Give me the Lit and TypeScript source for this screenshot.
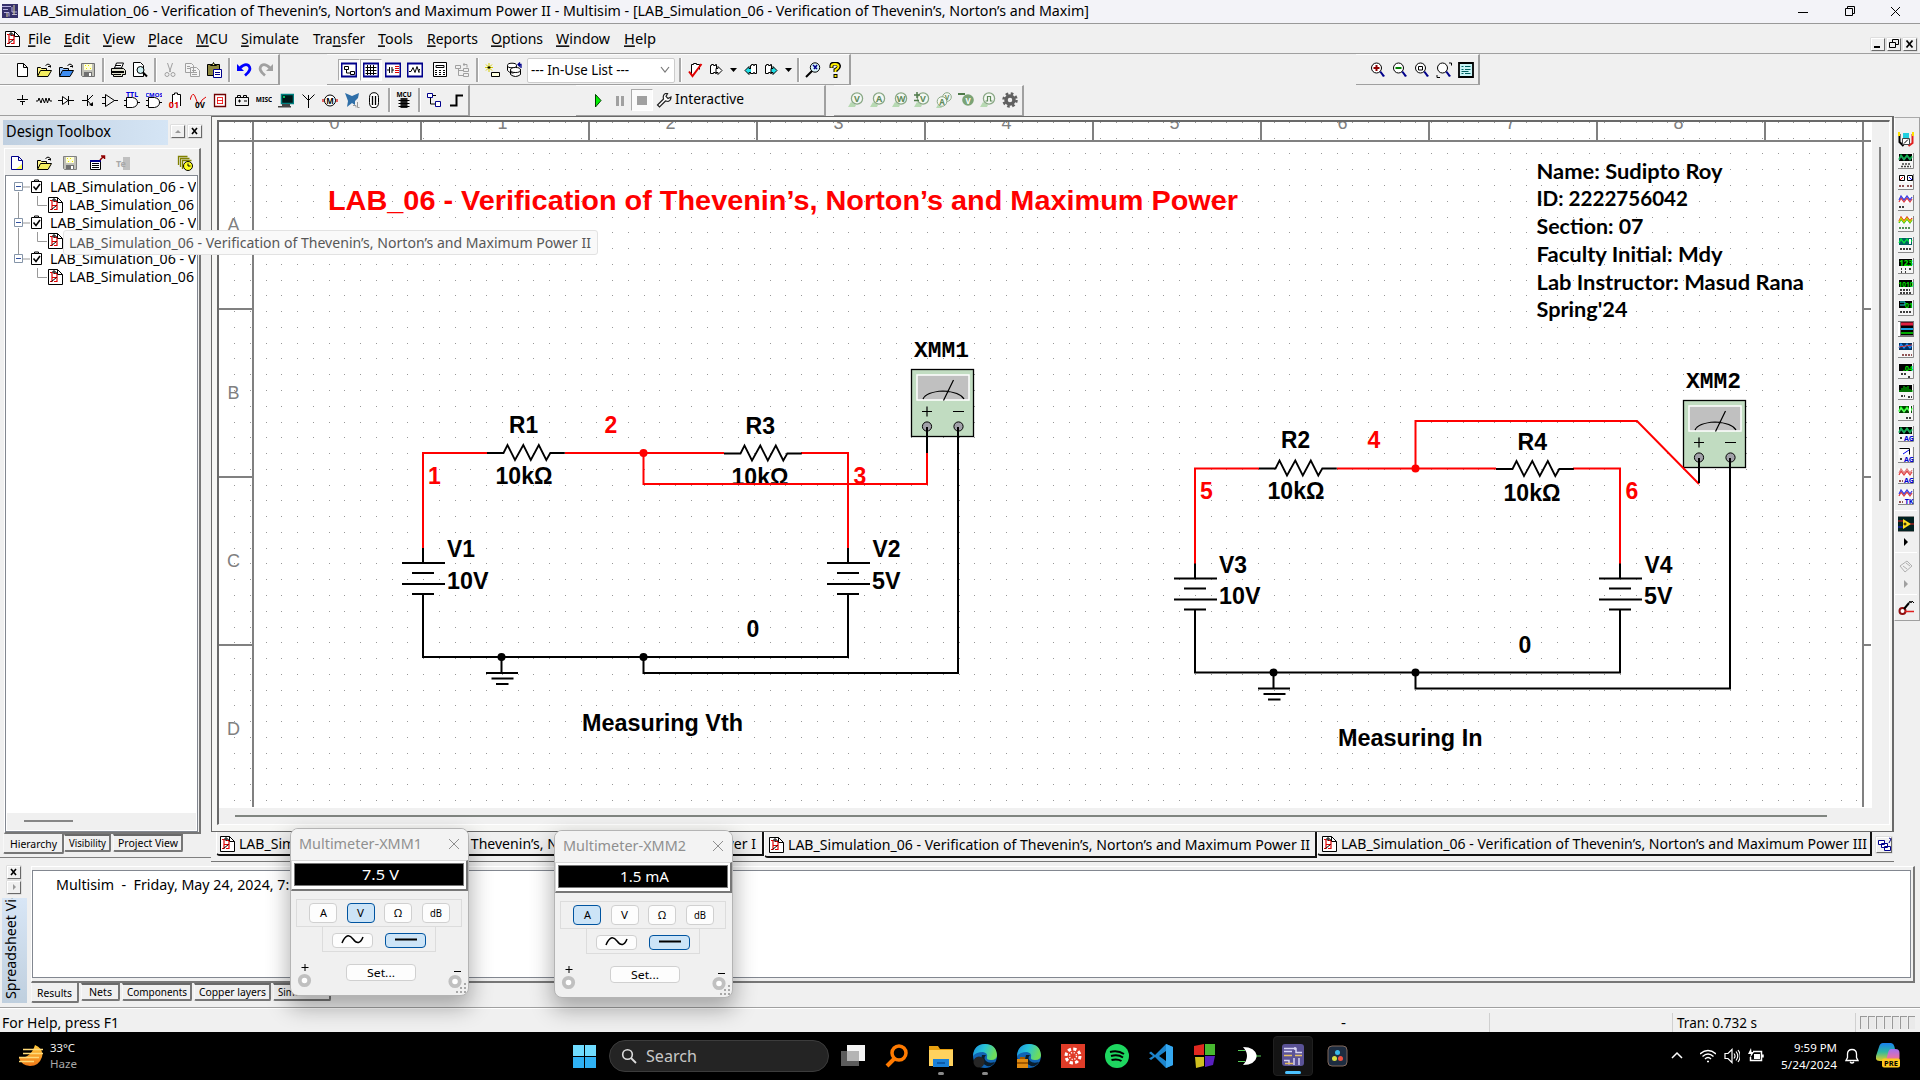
import { LitElement, html, svg, css } from "lit";
import { customElement, property } from "lit/decorators.js";

/** Text line drawn at an exact width; cap height is centred in the box. */
const fit = (t: unknown, w: number, size = 15, cls = "", h = 20) => html`<svg class="fit ${cls}" width=${w} height=${h}>
  <text x="0" y=${h / 2 + size * 0.36} font-size=${size} textLength=${w} lengthAdjust="spacingAndGlyphs">${t}</text></svg>`;

const pic = (body: unknown, w = 16, h = 16, cls = "") => html`<svg class="pic ${cls}" width=${w} height=${h} viewBox="0 0 ${w} ${h}">${body}</svg>`;

const S = (d: string, c = "#000", f = "none", w = 1) => svg`<path d=${d} stroke=${c} fill=${f} stroke-width=${w} />`;
const F = (d: string, f = "#000") => svg`<path d=${d} fill=${f} />`;

const folder = (a: string, b: string) => [
  S("M1.5 14V5.5h3l1 1h5v2", "#000", a), F("M1 14.5L4.5 8.5h11L12 14.5z", b), S("M1.5 14.5L4.5 8.5H15.5L12 14.5z", "#000"),
  S("M9.5 3.5q2.5-3 5 0v2M12 4.5h3", "#000"),
];
const floppy = (g: boolean) => [
  S("M1.5 1.5h13v13h-12l-1-1z", g ? "#808080" : "#707070", "#c0c0b8"), F("M4 2h8v6H4z", "#ffffd8"), F("M4 10h8v4H4z", "#707070"), F("M9 11h2v3H9z", "#fff"),
  S("M5 3l1 1m2-1l1 1m-3 2l1 1m3-1l1 1", "#e8e000"),
];
const sheet = [
  S("M1.5 .5h9l5 5v10h-14z", "#000", "#fff"), S("M10.5 .5v5h5"), S("M3 3.5h2v9H3m2-4h5v-4H7m3 4v4H7", "#e00000", "none", 1.2),
  S("M4.5 12.5l5-4M7 1v4m-2-2h4M8.5 3l3 2.5"),
];
const mag = (inner: unknown) => [svg`<circle cx="6.5" cy="6" r="5" fill="#fff" stroke="#000"/>`, F("M9.5 10l1.5-1 4 5-2 1z", "#00008b"), inner];
const probe = (inner: unknown) => [F("M0 15l3-5 5 3-1 2z", "#b7d9b2"), svg`<circle cx="9" cy="6.5" r="5.6" fill="#f4f8f3" stroke="#8aa886" stroke-width="1.3"/>`, inner];
const letter = (t: string, x = 9, y = 10, f = "#5f8a5a", s = 9) => svg`<text x=${x} y=${y} text-anchor="middle" font-size=${s} font-weight="700" fill=${f}>${t}</text>`;
const chip = (c: string) => [S("M1.5 3.5h1v-1h2v1h2v-1h1v9h-1v-1h-2v1h-3z", "#000", "#fff"), F("M7 6h2V4.500l4 4-4 4V11H7z", c), S("M7 6.500h2v-2l4 4-4 4v-2H7z")];

const I: Record<string, unknown> = {
  blank: S("M3.5 1.5h6l4 4v9h-10zM9.5 1.5v4h4", "#000", "#fff"),
  blankBlue: [S("M2.5 1.5h7l4 4v9h-11zM9.5 1.5v4h4", "#00008b", "#fff"), F("M7 14l6-5v5z", "#ffff60")],
  open: folder("#fff68a", "#f4ee60"), openBlue: folder("#9dc8ff", "#3d8cf0"), save: floppy(false), saveG: floppy(true),
  print: [S("M4.5 6l2-5h7l-2 5z", "#000", "#fff"), S("M1.5 6.5h12l2 2v4h-3v2h-9v-2h-2z", "#000", "#e2e2d0"), F("M2 9h12v2H2z"), S("M6 3.5h5M4 12.5h7")],
  preview: [S("M1.5 .5h7l3 3v11h-10z", "#000", "#fff"), svg`<circle cx="8.500" cy="8" r="3.500" fill="#cdeff2" stroke="#000"/>`, S("M11 10.500l4 4", "#000", "none", 2)],
  cut: [S("M5.500 1l3 9M10.500 1l-3 9", "#a0a0a0"), svg`<circle cx="5" cy="12.500" r="2" fill="none" stroke="#a0a0a0"/><circle cx="11" cy="12.500" r="2" fill="none" stroke="#a0a0a0"/>`],
  copy: S("M1.500 1.500h6l2 2v7h-8zM6.500 5.500h6l3 3v6h-9zM3 4.500h3m-3 2h3m2 2h4m-4 2h5m-5 2h5", "#a0a0a0", "#f4f4f4"),
  paste: [S("M1.500 2.500h12v11h-12z", "#000", "#8c8640"), S("M4.500 3.500v-1h2l1-2 1 2h2v1z", "#000", "#ffff80"), S("M7.500 7.500h8v8h-8zM9 10.500h5m-5 2h5", "#00008b", "#fff")],
  undo: [F("M1 2l0 7h7z", "#0000ff"), S("M4 6q5-5 8.500-2.500 4 4-3.500 10", "#0000ff", "none", 2.800)],
  redo: [F("M15 2v7H8z", "#a0a0a0"), S("M12 6q-5-5-8.500-2.500-4 4 3.500 10", "#a0a0a0", "none", 2.800)],
  boxes: [S("M.5 1.500h15v13H.5z", "#00008b", "#fff", 2), S("M3.500 4.500h4v3h-4zM9.500 9.500h4v3h-4zM5.500 8v3h4", "#000", "#fff")],
  grid: [S("M.5 1.500h15v13H.5z", "#00008b", "#fff", 2), S("M4.500 3v10M7.500 3v10M10.500 3v10M2.500 5.500h11M2.500 8.500h11M2.500 11.500h11")],
  cap: [S("M.5 1.500h15v13H.5z", "#00008b", "#fff", 2), S("M2 8h2.500M7 8h2M4.500 5v6M7 5v6"), S("M10 4.500h4m-4 2h4m-4 2h4m-4 2h4", "#e00000")],
  scope: [S("M.5 1.500h15v13H.5z", "#00008b", "#fff", 2), S("M2 9.500h2l2-4 2 5 2-6 2 6v-3h1")],
  calc: [S("M1.500 .5h13v14h-13z", "#000", "#fff"), S("M4 3.500h8v2H4z"), S("M3 8.500h2m2 0h2m2 0h2M3 10.500h2m2 0h2m2 0h2M3 12.500h2m2 0h2m2 0h2", "#000", "none", 1.200)],
  hier: S("M1.500 3.500h5v3h-5zM9.500 6.500h5v3h-5zM9.500 11.500h5v3h-5zM4.500 7v6.500h5M4.500 8.500h5M9 2.500h4v3M10 1v3", "#a0a0a0"),
  newpart: [S("M5 1v9M1 5.500h8M2 2.500l6 6M8 2.500l-6 6", "#d8d000"), S("M5 4v3M3.500 5.500h3"), S("M7.500 10.500h8v4h-8z", "#000", "#ffffe0")],
  db: [S("M1.500 3.500v5q2 2.500 5 2.500l4-1v-6.500M4.500 8.500v4q5 4 10 0v-5", "#000", "#fff"), svg`<ellipse cx="6" cy="3.500" rx="4.500" ry="2.300" fill="#fff" stroke="#000"/><ellipse cx="9.500" cy="8" rx="5" ry="2.500" fill="#fff" stroke="#000"/>`, S("M15 6V2.500h-3m2-2l-2 2 2 2", "#00008b", "none", 1.300)],
  check: [S("M4.500 13.500v-11h2v-1h3v1h3v5", "#000", "#fff"), S("M2 9.500l3.500 4.500L14.500 2", "#e00000", "none", 2)],
  exportw: chip("#fff"), cyanR: chip("#20e0e8"),
  cyanL: [S("M8.500 3.500h1v-1h2v1h1v-1h2v9h-2v-1h-1v1h-3z", "#000", "#fff"), F("M9 11H7v1.500l-4-4 4-4V6h2z", "#20e0e8"), S("M9 6.500H7v-2l-4 4 4 4v-2h2")],
  find: [svg`<circle cx="10" cy="5.500" r="4.700" fill="#d6f4fa" stroke="#000"/>`, S("M7 9l-6 6", "#000", "none", 2), S("M8 3l4 4m0-4l-3 4", "#00008b", "none", 1.500)],
  help: [S("M4.500 6V3.500q0-2 3.500-2t4 2.500q0 2-3.500 4v2", "#000", "none", 4), S("M4.500 5.500V4q0-2 3.500-2t3.500 2.500q0 1.500-3 3.500v2", "#ffee00", "none", 2), F("M6.500 12h4v4h-4z"), F("M7.500 13h2v2h-2z", "#ffee00")],
  zin: mag(F("M3.500 5h2V3h2v2h2v2h-2v2h-2V7h-2z", "#900000")), zout: mag(F("M3.500 5h6v2h-6z", "#008000")),
  zarea: mag(S("M4.500 4.500h4v3.500h-4z")), zfit: mag(S("M13 1h2.500v2.500M1 13v2.500h3")),
  zpage: [S("M1 1h14v14H1z", "#000", "#c8f4f6", 1.800), S("M3.500 4.500h2M3.500 7.500h2M3.500 11.500h2M7 4.500h5.500M7 7.500h5.500M3.500 9.500h7M7 11.500h5.500", "#006060")],
  src: S("M3 7.500h11M6 9.500h5M8.500 3v4M8.500 10v3", "#000"),
  res: S("M-1 9h3l1-3 2 5 1.500-5 2 5 1.500-5 1.500 5 1.500-5 1 3h3", "#000"),
  diode: [S("M-1 8.500h18M10.500 4v9"), S("M4.500 4.500v8l5.500-4z", "#000", "#fff")],
  bjt: [S("M2 8.500h5M7.500 3v11M8 8l5-5M8 9l4 5"), F("M13 14v-4l-4 3z")],
  opamp: S("M3.500 2.500v12l9-6zM0 5.500h3.500M0 11.500h3.500M12 8.500h4"),
  ttl: [S("M2.500 5.500h6q5 1 5 5t-5 5h-6zM0 8.500h3M0 13.500h3M13 10.500h4", "#000", "#fff"), letter("TTL", 8, 5, "#0000e0", 7)],
  cmos: [S("M2.500 5.500h6q5 1 5 5t-5 5h-6zM0 8.500h3M0 13.500h3M13 10.500h4", "#000", "#fff"), letter("CMOS", 8, 5, "#0000e0", 6)],
  dig: [S("M4.500 12V2.500h2V1h3v1.500h3V14", "#000", "#fff"), letter("01", 6, 15.500, "#e00000", 9)],
  mix: [S("M0 8q3-11 6-1t6 1l4-3", "#e00000"), letter("0V", 10, 15.500, "#000", 8)],
  ind: [S("M2.500 2.500h11v12h-11z", "#700000", "#fff", 1.300), S("M5 5.500h6M5 8.500h6M5 11.500h6M5.500 6v6M10.500 6v6", "#f00000", "none", .8)],
  pwr: S("M1.500 5.500h13v8h-13zM3.500 5V3.500h3V5M9.500 5V3.500h3V5M4 9h3M5.500 7.500v3M10 9h3"),
  misc: letter("MISC", 8, 10, "#000", 6.500),
  term: [S("M3.500 2.500h12v9h-12z", "#008080", "#001818", 1.500), F("M0 14h13v1.500H0zM4 12h8v2H4z", "#444"), F("M5 4h2v2H5z", "#00c060")],
  ant: S("M8.500 3v13M2.500 2.500l6 6 6-6"),
  mot: [S("M0 8.500h16"), svg`<circle cx="8" cy="8.500" r="5.500" fill="#fff" stroke="#000"/>`, letter("M", 8, 11.500, "#000", 8), F("M0 7h2v3H0zM14 7h2v3h-2z", "#e06060")],
  bird: [F("M1 1l7 3 7-3-1 5-3 3v4l-3-2-5 4 1-6z", "#2f6fa8"), S("M9 13.500h3v2M13.500 10v5.500h2", "#999")],
  conn: [S("M8 .7q4.500 0 4.500 5v5q0 5-4.500 5t-4.500-5v-5q0-5 4.500-5z", "#000", "#fff"), S("M6.500 4v9M9.500 4v9", "#000", "none", 1.300)],
  mcu: [letter("MCU", 8, 5, "#000", 6.500), F("M4.500 6h7v10h-7z", "#222"), S("M2.500 8.500h11M2.500 11.500h11M2.500 14.500h11")],
  hb: [S("M1.500 1.500h5v4h-5zM9.500 9.500h5v5h-5z", "#00008b", "#fff"), S("M4.500 6v6H9M7 3.500h3")],
  bus: S("M2 13.500h6.500V3.500H15", "#000", "none", 2),
  pV: probe(letter("V")), pA: probe(letter("A")), pW: probe(letter("W")),
  pDV: [probe(letter("V")), S("M0 3h6M3 0v6M0 8.500h5", "#4f7a4a", "none", 1.500)],
  pAV: [F("M0 16l3-5 3 5z", "#b7d9b2"), svg`<circle cx="11" cy="5" r="4.300" fill="#f4f8f3" stroke="#8aa886"/><circle cx="6" cy="9.500" r="4.800" fill="#f4f8f3" stroke="#8aa886"/>`, letter("V", 11, 8, "#5f8a5a", 7), letter("A", 6, 12.500, "#5f8a5a", 8)],
  pRef: [S("M0 2h7", "#4f7a4a", "none", 2), svg`<circle cx="10" cy="8" r="5.800" fill="#7ba375"/>`, letter("V", 10, 11.500, "#fff", 8)],
  pDig: probe(S("M5.500 9h2V4.500h3V9h2", "#5f8a5a", "none", 1.200)),
  gear: [svg`<circle cx="8" cy="8" r="4" fill="none" stroke="#606060" stroke-width="3.500"/><circle cx="8" cy="8" r="6.500" fill="none" stroke="#606060" stroke-width="2.500" stroke-dasharray="2.600 2.500"/>`],
  play: [F("M5 2l6 6.500L5 15z", "#00f000"), S("M5.500 2.500l5.500 6-5.500 6.500z", "#004000")],
  pause: F("M4 4h3v10H4zM9 4h3v10H9z", "#a0a0a0"), stop: F("M3 4h10v9H3z", "#a0a0a0"),
  wrench: S("M1.500 13l6-6q-1-4 2-5.500h2l-1.500 3 2 2 3-1.500q0 3.500-3 4.500l-2.500-.5-6 6z", "#222", "#fff", 1.200),
  detach: [S("M1.500 5.500h10v9h-10zM3 8.500h7m-7 2h7m-7 2h7", "#000", "#fff"), F("M1 5h11v2H1z", "#00008b"), S("M11 5l4-4m-3 0h3.500v3", "#900000", "none", 1.500)],
  rename: [F("M8 2h7v13H8z", "#c0c0c0"), letter("Te", 6, 12, "#a8a8a8", 9)],
  recent: [S("M1.500 10V1.500h9M3.500 12V3.500h9M5.500 14V5.500h9", "#808000", "none", 1.300), svg`<circle cx="11" cy="11" r="4.500" fill="#ffff20" stroke="#000"/>`, S("M11 8.500V11h2.500")],
  clip: [S("M1.500 2.500h10v11h-10z", "#000", "#fff"), S("M4.500 2.500V1h4v1.500z", "#000", "#fff"), S("M3.500 7.500l2.500 3 4-5.500", "#000", "none", 1.600)],
  min: S("M3 9.500h10"), rest: S("M4.500 5.500h7v7h-7zM6.500 5.500v-2h7v7h-2"), close: S("M4 4l9 9M13 4l-9 9"),
  cascade: S("M1.500 3.500h6v4h-6zM4.500 6.500h6v4h-6zM7.500 9.500h6v4h-6zM12 1l2 1-2 4", "#00008b", "#fff"),
};

/** Miniature instrument: a screen on top of a white panel with terminals. */
const inst = (screen: string, trace: unknown, tag = "", dots = "M2 13h2m2 0h2m2 0h2", dc = "#000") => pic([
  F("M0 0h16v16H0z", "#f6f6f6"), S("M15.500 0v15.500H0", "#888"), F("M1 1h13v7H1z", screen), trace,
  svg`<path d=${dots} stroke=${dc} stroke-width="1.400" stroke-dasharray="2 1" fill="none"/>`, tag ? letter(tag, 11, 15, "#0000d0", 7) : "",
], 16, 16);
const zig = (c: string, y = 4) => S(`M1 ${y + 2}l2-4 3 4 3-4 3 4 2-3`, c, "none", 1.300);
const instruments = [
  pic([S("M1.500 2v8l4 4", "#000", "none", 2), S("M14.500 2v9l-4 3", "#e02020", "none", 2), F("M0 0h2v4H0zM14 0h2v4h-2z", "#ffe000"), F("M5 1h6v5H5z", "#20d0e0"), S("M4.500 6.500h7v6h-7z", "#444", "#fff"), S("M6 11.500l4-4")]),
  inst("#000", [zig("#00c040"), zig("#20a060", 5)], "", "M4 11h8M3 13.500h10", "#444"),
  inst("#fff", [S("M1.500 1.500h5v5h-5zM9.500 1.500h5v5h-5z"), S("M2 6l3-3", "#f00000"), S("M11 3l3 3", "#0000f0")], "", "M1 12h6m2 0h6", "#702020"),
  inst("#fff", [zig("#e04040", 5), zig("#4040e0", 3)], "", "M1 12h6"),
  inst("#fff", [zig("#20c020", 5), zig("#e02020", 3), zig("#d0d000", 4)], "", "M1 12h11", "#207020"),
  inst("#006060", [zig("#00e040"), S("M12 2v5", "#fff", "none", 2)], "", "M2 12h11"),
  inst("#000", letter("123", 8, 7.500, "#00e000", 8), "", "M3 11h1m3 0h1m3 0h2M3 14h1m3 0h1"),
  inst("#000", letter("1010", 8, 7.500, "#00e000", 6.500), "", "M2 11h10M2 14h12"),
  inst("#000", [S("M2 2h5v3H2", "#20e0e8"), letter("01", 11, 8, "#00e000", 7)], "", "M2 12h12"),
  pic([F("M0 0h16v16H0z", "#777"), F("M3 1h12v13H3z", "#000"), S("M3 3h12", "#e02040", "none", 3), S("M3 8h12", "#20a0e0", "none", 2), S("M3 12h12", "#00e000", "none", 1.500), S("M1 1v14", "#fff", "none", 2)]),
  inst("#003060", [zig("#2090ff"), S("M1 5l13-2", "#e04040")], "", "M4 13h10", "#702020"),
  inst("#000", letter(".04", 10, 8, "#00e000", 7), "", "M3 11h6M10 14h3"),
  inst("#000", S("M2 8V6m2 2V4m2 4V2m2 6V3m2 5V2m2 6V5m2 3V6", "#00e000"), "", "M3 12h4m3 1h4"),
  inst("#004000", [zig("#00f000"), zig("#60ff60", 5), S("M12 1v7", "#fff", "none", 2)], "", "M8 13h6"),
  inst("#000", [zig("#00c040"), zig("#20a060", 5)], "AG", "M2 12h3"),
  inst("#fff", [S("M1.500 1.500h10v6"), S("M5 7l6-4", "#0000f0")], "AG", "M2 12h2"),
  inst("#fff", [zig("#e04040", 5), zig("#e08080", 3)], "AG", "M1 13h4", "#702020"),
  inst("#fff", [zig("#e04040", 5), zig("#4040e0", 3)], "TK", "M1 13h4", "#702020"),
];
const dropR = (c: string) => pic(F("M5 1l4 4-4 4z", c), 14, 10);

const dots = (() => {
  let d = "";
  for (let j = 0; j < 44; j++) for (let i = 0; i < 104; i++) {
    d += `M${Math.floor(234.6 + 15.75 * i)} ${Math.floor(122.4 + 15.77 * j)}h1v1h-1z`;
  }
  return d;
})();

const edge = (extra: unknown = "") => pic([
  svg`<defs><linearGradient id="eg" x1="0" y1="0" x2="1" y2=".3"><stop offset="0" stop-color="#1a8fe0"/><stop offset=".5" stop-color="#28c4d8"/><stop offset="1" stop-color="#6fdc5a"/></linearGradient></defs>
  <circle cx="12" cy="12" r="12" fill="#1164b4"/>`,
  svg`<path d="M0 12Q1 0 12 0t12 11q0 5-6 5-5 0-4-3 1-4-4-5Q3 8 0 12z" fill="url(#eg)"/>`,
  F("M9 11q-3 8 5 11 5 1 8-4-6 2-9-1-3-3 0-6z", "#0a1d2c"), extra,
], 24, 24);

@customElement("multi-meter")
export class MultiMeter extends LitElement {
  @property() name = "";
  @property() reading = "";
  @property() mode = "";
  @property({ type: Number }) readingWidth = 36;

  static styles = css`
    :host { display: block; font-family: "Noto Sans", "Open Sans", sans-serif; }
    .win { box-sizing: border-box; width: 179px; height: 168px; border: 1px solid #b4b4b4; border-radius: 8px; background: #f0f0f0; box-shadow: 0 10px 22px 2px rgba(0,0,0,.3); overflow: hidden; }
    svg { display: block; overflow: visible; flex: none; }
    .bar { box-sizing: border-box; height: 31px; display: flex; align-items: center; justify-content: space-between; padding: 0 8px 1px 8px; background: #f3f3f3; fill: #8f8f8f; }
    .screen { box-sizing: border-box; height: 31px; border: 1px solid #d8d8d8; border-right: 2px solid #777; border-bottom: 2px solid #777; background: #fff; padding: 2px 2px 3px 2px; }
    .lcd { box-sizing: border-box; height: 23px; border: 1px solid #777; background: #000; fill: #fff; display: flex; justify-content: center; align-items: center; padding-left: 2px; }
    .modes { margin: 8px 0 0 5px; border: 1px solid #dcdcdc; display: flex; align-items: center; padding-left: 12px; gap: 9.6px; box-sizing: border-box; width: 166px; height: 28px; }
    .b { box-sizing: border-box; width: 28px; height: 20px; border: 1px solid #d0d0d0; border-radius: 4px; background: #fdfdfd; display: flex; align-items: center; justify-content: center; fill: #000; font-size: 11px; }
    .on { background: #cce4f7; border: 1px solid #0054a0; }
    .wave { box-sizing: border-box; width: 114px; height: 25px; margin-left: 31px; border: 1px solid #dcdcdc; border-top: 0; display: flex; align-items: center; justify-content: space-between; padding: 2px 9px 0; }
    .wave .b { width: 41px; height: 15px; }
    .foot { display: flex; justify-content: space-between; padding: 11px 0 0 7px; height: 30px; }
    .set { width: 70px; height: 17px; margin-top: 1px; margin-left: 20px; }
  `;

  render() {
    const ring = (x: number, y: number) => svg`<circle cx=${x} cy=${y} r="4.700" fill="#fff" stroke="#c0c0c0" stroke-width="3.800"/>`;
    const widths: Record<string, number> = { A: 7, V: 7, "Ω": 8, dB: 12 };
    return html`<div class="win">
      <div class="bar">${fit(`Multimeter-${this.name}`, 123, 15)}${pic(S("M1 1l10 10M11 1L1 11", "#8f8f8f"), 12, 12)}</div>
      <div class="screen"><div class="lcd">${fit(this.reading, this.readingWidth, 15)}</div></div>
      <div class="modes">${Object.keys(widths).map((m) => html`<div class="b ${m === this.mode ? "on" : ""}">${fit(m, widths[m], 11, "", 16)}</div>`)}</div>
      <div class="wave">
        <div class="b">${pic(S("M1 8q5-12 11-4t10-2", "#000", "none", 1.500), 23, 10)}</div>
        <div class="b on">${pic(S("M0 4.500h22", "#000", "none", 2), 22, 10)}</div>
      </div>
      <div class="foot">
        <svg width="14" height="28">${S("M3.500 4.500h7M7 1v7")}${ring(6.500, 17.500)}</svg>
        <div class="b set">${fit("Set...", 28, 11.500, "", 16)}</div>
        <svg width="38" height="32">${S("M24 8.500h7")}${ring(25, 18.500)}${F("M34 20h2v2h-2zM30 24h2v2h-2zM34 24h2v2h-2zM26 28h2v2h-2zM30 28h2v2h-2zM34 28h2v2h-2z", "#a8a8a8")}</svg>
      </div></div>`;
  }
}

@customElement("app-root")
export class AppRoot extends LitElement {
  static styles = css`
    :host { display: block; width: 1920px; height: 1080px; overflow: hidden; font-family: "Noto Sans", "Open Sans", sans-serif; background: #f0f0f0; color: #000; }
    svg { display: block; flex: none; }
    .fit { overflow: visible; }
    .up { margin-top: -3px; }
    .app { position: relative; width: 1920px; height: 1080px; display: flex; flex-direction: column; overflow: hidden; }
    .app * { box-sizing: border-box; }
    .title, .menu, .bars, .bar, .tabs, .status, .task { display: flex; }
    .title { height: 24px; background: #f3f3f8; border-bottom: 1px solid #999; align-items: center; padding: 0 17px 0 2px; }
    .sp { flex: 1; }
    .title .wins { display: flex; gap: 30px; padding-bottom: 1px; }
    .menu { height: 30px; border-bottom: 1px solid #a0a0a0; align-items: center; padding: 1px 3px 0 4px; }
    .u { text-decoration: underline; }
    .mdi { display: flex; gap: 2px; padding-top: 11px; }
    .btn3 { width: 14px; height: 13px; background: #f0f0f0; border: 1px solid #fff; border-right-color: #696969; border-bottom-color: #696969; display: flex; align-items: center; justify-content: center; box-shadow: 0 0 0 .5px #ccc; }
    .bars { height: 31px; }
    .bar { height: 31px; align-items: center; border: 1px solid #fdfdfd; border-right-color: #a0a0a0; border-bottom-color: #a0a0a0; border-width: 1px 2px 1px 0; padding-left: 11px; }
    .bars.top .bar { padding-top: 2px; }
    .c { width: 22px; height: 22px; display: flex; align-items: center; justify-content: center; flex: none; }
    .c.on { background: #fbfbfb; border: 1px solid #aaa; border-right-color: #fff; border-bottom-color: #fff; }
    .s { width: 8px; flex: none; height: 24px; display: flex; justify-content: center; }
    .s::before { content: ""; width: 2px; background: #a8a8a8; border-right: 1px solid #fff; }
    .gap { width: 3px; flex: none; }
    .dd { width: 11px; display: flex; justify-content: center; flex: none; }
    .combo { width: 148px; height: 25px; background: #fff; border: 1px solid #ccc; display: flex; align-items: center; justify-content: space-between; padding: 0 4px 0 3px; margin: 0 1px 0 2px; flex: none; border-radius: 2px; }
    .main { display: flex; height: 746px; }
    .dock { width: 211px; display: flex; flex-direction: column; height: 742px; padding-left: 3px; border-bottom: 1px solid #808080; }
    .dhead { display: flex; height: 32px; padding-top: 4px; }
    .dtitle { width: 165px; height: 25px; background: linear-gradient(90deg, #bfcfe0, #d5e5f5); padding: 0 0 3px 3px; display: flex; align-items: center; margin-right: 3px; }
    .dbtns { display: flex; gap: 3px; padding-top: 5px; }
    .dbody { margin-left: 1px; width: 197px; height: 686px; border: 1px solid #fff; border-right: 2px solid #777; border-bottom: 2px solid #777; display: flex; flex-direction: column; }
    .dtools { display: flex; height: 26px; align-items: center; padding: 3px 5px 0 4px; gap: 9.500px; }
    .tree { flex: 1; background: #fff; border: 1px solid #828790; display: flex; flex-direction: column; padding-top: 2px; overflow: hidden; margin-right: 1px; }
    .tr { height: 18px; display: flex; align-items: center; overflow: hidden; width: 190px; flex: none; }
    .tgap { width: 6px; flex: none; }
    .hs { height: 17px; margin: auto 1px 1px 1px; background: #f0f0f0; padding: 7px 0 0 17px; flex: none; }
    .thumb { height: 2px; width: 49px; background: #868686; }
    .tabs { align-items: flex-start; }
    .tab { height: 18px; border: 1px solid #696969; border-top-width: 2px; border-left-color: #f8f8f8; border-right: 2px solid #777; border-bottom: 2px solid #777; display: flex; align-items: center; justify-content: center; border-radius: 0 0 2px 2px; margin-right: 2px; }
    .tab.act { height: 20px; border-top: 0; padding-top: 3px; }
    .view { width: 1683px; height: 746px; display: flex; flex-direction: column; }
    .vbox { height: 716px; border: 1px solid #696969; padding: 3px 3px 0 5px; background: #f6f6f4; border-right-width: 2px; }
    .frame { width: 1673px; height: 705px; border: 2px solid #696969; border-right: 1px solid #fff; border-bottom: 1px solid #fff; display: grid; grid-template-columns: 1653px 17px; grid-template-rows: 686px 16px; background: #f0f0f0; }
    .vs { padding: 25px 0 0 7px; }
    .vthumb { width: 2px; height: 354px; background: #868686; }
    .hsb { padding: 7px 0 0 16px; }
    .hthumb { height: 2px; width: 1592px; background: #808580; }
    .docs { display: flex; height: 30px; padding-left: 5px; align-items: flex-start; border-bottom: 1px solid #777; }
    .doc { height: 24px; display: flex; align-items: center; padding: 2px 0 0 3px; gap: 4px; border-right: 2px solid #111; border-bottom: 2px solid #111; border-left: 1px solid #fff; border-radius: 0 0 0 4px; flex: none; }
    .doc:first-child { padding-left: 2px; }
    .doc.act { height: 26px; }
    .inst { width: 26px; height: 504px; margin-top: 1px; border-left: 1px solid #fff; border-right: 1px solid #a0a0a0; border-bottom: 1px solid #a0a0a0; border-top: 1px solid #aaa; padding: 14px 2px 0 0; display: flex; flex-direction: column; gap: 5px; align-items: center; flex: none; }
    .hr { width: 22px; height: 1px; background: #a0a0a0; border-bottom: 1px solid #fff; flex: none; }
    .spread { height: 147px; display: flex; padding-top: 4px; border-bottom: 1px solid #a0a0a0; }
    .side { width: 31px; padding-left: 2px; display: flex; flex-direction: column; }
    .side .btn3 { margin: 0 0 2px 5px; }
    .vert { height: 105px; width: 25px; background: linear-gradient(180deg, #d8e6f6, #bfcfde); margin-top: 2px; overflow: hidden; }
    .vert svg { overflow: hidden; }
    .sheetcol { display: flex; flex-direction: column; width: 1884px; }
    .log { height: 117px; border: 1px solid #fff; border-right: 2px solid #777; border-bottom: 2px solid #777; padding: 3px 2px 3px 0; flex: none; }
    .logbox { height: 108px; background: #fff; border: 1px solid #828790; padding: 4px 0 0 23px; }
    .status { height: 24px; align-items: center; padding: 4px 4px 0 2px; border-top: 1px solid #fff; }
    .cell { height: 20px; border-left: 1px solid #d0d0d0; display: flex; align-items: center; }
    .segs { display: flex; gap: 1px; padding-left: 4px; }
    .seg { width: 7px; height: 13px; background: #eaeaea; border-left: 1px solid #999; border-top: 1px solid #999; }
    .task { height: 48px; background: #000; align-items: center; fill: #fff; }
    .stack { display: flex; flex-direction: column; }
    .dim { fill: #a8a8a8; }
    .hi { fill: #f0f0f0; }
    .search { width: 220px; height: 32px; border-radius: 16px; background: #242424; border: 1px solid #3c3c3c; display: flex; align-items: center; padding-left: 11px; gap: 9px; margin: 0 2px 0 13px; fill: #c8c8c8; }
    .app44 { width: 44px; height: 48px; display: flex; flex-direction: column; align-items: center; padding-top: 12px; gap: 4px; flex: none; }
    .app44.act { width: 40px; margin: 0 2px; height: 40px; padding-top: 7px; background: #141414; border-radius: 4px; border: 1px solid #202020; gap: 5px; }
    .ind { width: 6px; height: 3px; border-radius: 2px; background: #8a8a8a; }
    .ind.wide { width: 16px; background: #4cc2ff; }
    .tip { position: absolute; left: 63px; top: 230px; width: 535px; height: 25px; background: #f9f9f9; border: 1px solid #e2e2e2; border-radius: 3px; padding: 1px 0 0 5px; fill: #575757; }
    .m1 { position: absolute; left: 290px; top: 828px; }
    .m2 { position: absolute; left: 554px; top: 830px; }
    .lb { font-family: "Liberation Sans", Arial, sans-serif; font-weight: 700; font-size: 23px; }
    .big { font-size: 28px; }
    .red { fill: #f00; }
    .rul { font-family: "Liberation Sans", Arial, sans-serif; font-size: 18px; fill: #808080; }
    .mono { font-family: "Liberation Mono", monospace; font-weight: 700; font-size: 22px; }
    .info { font-family: Lato, "Open Sans", sans-serif; font-weight: 700; font-size: 21.500px; }
    .crisp { shape-rendering: crispEdges; }
  `;

  private cells(names: string, on: string[] = []) {
    return names.split(" ").map((n) => n === "|" ? html`<div class="s"></div>`
      : n === "." ? html`<div class="gap"></div>`
      : n === "v" ? html`<div class="dd">${pic(F("M0 0h7L3.500 4z"), 7, 5)}</div>`
      : html`<div class="c ${on.includes(n) ? "on" : ""}">${pic(I[n])}</div>`);
  }

  private label(t: string, x: number, y: number, w: number, cls = "lb") {
    return svg`<text class=${cls} x=${x} y=${y} textLength=${w} lengthAdjust="spacingAndGlyphs">${t}</text>`;
  }

  private battery(x: number, y: number) {
    return svg`<path d="M${x} ${y}v14M${x - 21} ${y + 15}h43M${x - 11} ${y + 25}h22M${x - 21} ${y + 36}h43M${x - 11} ${y + 46}h22M${x} ${y + 46}v63" stroke="#000" stroke-width="2"/>`;
  }

  private resistor(x: number, y: number) {
    return svg`<path d="M${x} ${y}h16.500l4-8 7.500 15 8.300-15 7.500 15 8-15 7.500 15 4-7h14.500" stroke="#000" stroke-width="1.800" fill="none"/>`;
  }

  /** Loop shared by both circuits, in the coordinates of the left one. */
  private loop(names: string[]) {
    const [ra, rb, va, vb, na, nb] = names;
    return svg`
      <path d="M423 549V453H487M565 453H724M801 453H848V549" stroke="#f00" stroke-width="2" fill="none"/>
      <path d="M423 656V657H848V656M501.500 657V673M486 673h32M491.500 678.500h22M496 684h12.500M643.500 657V673H958V600" stroke="#000" stroke-width="2" fill="none"/>
      ${this.resistor(487, 453)}${this.resistor(724, 453.500)}
      ${this.battery(423, 548)}${this.battery(848, 548)}
      <circle cx="501.500" cy="657" r="4"/><circle cx="643.500" cy="657" r="4"/><circle cx="643.500" cy="453" r="4" fill="#f00"/>
      ${this.label(ra, 509, 432.500, 29)}${this.label("10kΩ", 495.500, 483.500, 57)}
      ${this.label(rb, 745.500, 434, 29.500)}${this.label("10kΩ", 731.500, 485, 57)}
      ${this.label(va, 447, 557, 28)}${this.label("10V", 447, 588.500, 41.500)}
      ${this.label(vb, 872.500, 557, 28)}${this.label("5V", 872, 588.500, 28.500)}
      ${this.label("0", 746.500, 637, 12.800)}
      ${this.label(na, 428, 483.500, 12.800, "lb red")}${this.label(nb, 853.500, 483.500, 12.800, "lb red")}`;
  }

  private meter(name: string) {
    return svg`
      <rect x="911.500" y="369.500" width="62" height="67" fill="#c1dcc1" stroke="#000" stroke-width="1.300"/>
      <rect x="917" y="375" width="52" height="25" fill="#c0c0c0" stroke="#fff" stroke-width="1.500"/>
      <path d="M923 399q3-7 20-8 17 1 21 8M953.500 380L943.500 400.500M922 411.500h10M927 406.500v10M953 411.500h11" stroke="#000" fill="none" stroke-width="1.200"/>
      <circle cx="927" cy="426.500" r="4.600" fill="#a0a0a8" stroke="#000"/><circle cx="958.500" cy="426.500" r="4.600" fill="#a0a0a8" stroke="#000"/>
      ${this.label(name, 914, 356.500, 55, "mono")}`;
  }

  private schematic() {
    const T = (t: string, w: number, y: number) => this.label(t, 1536.500, y, w, "info");
    const cols = [0, 1, 2, 3, 4, 5, 6, 7, 8];
    return html`<svg width="1653" height="686" viewBox="219 122 1653 686">
      <rect x="219" y="122" width="1653" height="686" fill="#fff"/>
      <path class="crisp" d=${dots} fill="#989898"/><path d="M1864.500 142v666h7V142z" fill="#fff"/>
      <path d="M219 141H1871M253 122V807M1863 122V807M219 309h34M219 477h34M219 645h34M1863 309h8M1863 477h8M1863 645h8${cols.map((i) => `M${421 + 168 * i} 122v19`).join("")}" stroke="#808080" stroke-width="2" fill="none"/>
      ${cols.map((i) => svg`<text class="rul" x=${329.500 + 168 * i} y="129">${i}</text>`)}
      ${["A", "B", "C", "D"].map((c, i) => svg`<text class="rul" text-anchor="middle" x="233.500" y=${230.500 + 168.300 * i}>${c}</text>`)}
      ${this.label("LAB_06 - Verification of Thevenin’s, Norton’s and Maximum Power", 328, 209.500, 910, "lb red big")}
      ${T("Name: Sudipto Roy", 186, 178.500)}${T("ID: 2222756042", 151.500, 206)}${T("Section: 07", 107, 233.500)}
      ${T("Faculty Initial: Mdy", 186, 261.500)}${T("Lab Instructor: Masud Rana", 267.500, 289.500)}${T("Spring'24", 91, 317)}
      ${this.meter("XMM1")}
      <g>${this.loop(["R1", "R3", "V1", "V2", "1", "3"])}</g>
      <path d="M643.500 453V484H927V453" stroke="#f00" stroke-width="2" fill="none"/>
      <path d="M927 453V427M958 620V427" stroke="#000" stroke-width="2"/>
      ${this.label("2", 604.500, 432.500, 12.800, "lb red")}${this.label("Measuring Vth", 582, 730.500, 161)}
      <g transform="translate(772 31)">${this.meter("XMM2")}</g>
      <g transform="translate(772 15.500)">${this.loop(["R2", "R4", "V3", "V4", "5", "6"])}</g>
      <path d="M1415.500 468V421H1637L1699 484" stroke="#f00" stroke-width="2" fill="none"/>
      <path d="M1699 483V458M1730 640V458" stroke="#000" stroke-width="2"/>
      ${this.label("4", 1367.500, 448, 12.800, "lb red")}${this.label("Measuring In", 1338, 746, 144.500)}
    </svg>`;
  }

  render() {
    const doc = "LAB_Simulation_06 - Verification of Thevenin’s, Norton’s and Maximum Power";
    const menus: [string, number, number, number][] = [
      ["File", 0, 23, 13], ["Edit", 0, 26, 13], ["View", 0, 32, 13], ["Place", 0, 35, 13], ["MCU", 0, 32, 13], ["Simulate", 0, 58, 13.5],
      ["Transfer", 3, 52, 13.5], ["Tools", 0, 35, 13.5], ["Reports", 0, 51, 13], ["Options", 0, 52, 13], ["Window", 0, 54, 14], ["Help", 0, 32, 0]];
    const tree = (i: number) => html`
      <div class="tr">${pic([S("M16.500 9h10", "#999"), i < 2 ? S("M12.500 14v5", "#999") : "", i > 0 ? S("M12.500 0v4", "#999") : "", S("M8.500 4.500h8v8h-8z", "#8494a8", "#fff"), S("M10 8.500h5", "#3050a0")], 24, 18)}${pic(I.clip, 14, 15)}
        <div class="tgap"></div>${fit("LAB_Simulation_06 - Verification", 213, 15, "", 18)}</div>
      <div class="tr">${pic([i < 2 ? S("M12.500 0v18", "#999") : "", S("M31.500 0v9.500h10", "#999")], 41, 18)}${pic(sheet)}
        <div class="tgap"></div>${fit("LAB_Simulation_06", 125, 15, "", 18)}</div>`;
    const app = (icon: unknown, ind = "") => html`<div class="app44 ${ind === "wide" ? "act" : ""}">${icon}${ind ? html`<div class="ind ${ind}"></div>` : ""}</div>`;
    return html`<div class="app">
      <div class="title">
        ${pic([F("M0 1h16v14H0z", "#35306a"), S("M0 3.500h9M1 6.500h5M10 4v5h5M2 9.500h5v4M10 11.500h5", "#b8b0e0"), S("M12 2v10M5 10v4", "#e0d8a0")])}
        <span style="width:5px"></span>${fit(`${doc} II - Multisim - [LAB_Simulation_06 - Verification of Thevenin’s, Norton’s and Maxim]`, 1066, 15)}
        <div class="sp"></div><div class="wins">${pic(I.min)}${pic(I.rest)}${pic(I.close)}</div>
      </div>
      <div class="menu">${pic(sheet)}<span style="width:8px"></span>
        ${menus.map(([m, u, w, g]) => html`${fit(svg`${m.slice(0, u)}<tspan class="u">${m[u]}</tspan>${m.slice(u + 1)}`, w, 15)}<span style="width:${g}px"></span>`)}
        <div class="sp"></div>
        <div class="mdi"><div class="btn3">${pic(F("M1 7h6v2H1z"), 10, 10)}</div><div class="btn3">${pic(S("M3.500 3V.5h6v5H7M.5 3.500h6v5h-6z"), 10, 10)}</div><div class="btn3">${pic(S("M1.500 1.500l6 7m0-7l-6 7", "#000", "none", 1.800), 10, 10)}</div></div>
      </div>
      <div class="bars top">
        <div class="bar" style="width:280px">${this.cells("blank open openBlue save | print preview | cut copy paste | undo redo")}</div>
        <div class="bar" style="width:524px;margin-left:47px">${this.cells("boxes grid cap scope . calc hier | newpart db", ["boxes", "grid"])}
          <div class="combo">${fit("--- In-Use List ---", 98, 14)}${pic(S("M1 1l4 5 4-5", "#777", "none", 1.200), 10, 8)}</div>
          ${this.cells("| check exportw v cyanL cyanR v | find help")}</div>
        <div class="bar" style="width:124px;margin-left:505px;padding-left:11px">${this.cells("zin zout zarea zfit zpage")}</div>
      </div>
      <div class="bars">
        <div class="bar" style="width:470px">${this.cells("src res diode bjt opamp ttl cmos dig mix ind pwr misc term ant mot bird conn | mcu | hb bus")}</div>
        <div class="bar" style="width:250px;margin-left:106px">${this.cells("play pause stop wrench", ["stop"])}${fit("Interactive", 69, 15, "up", 22)}</div>
        <div class="bar" style="width:190px;margin-left:8px">${this.cells("pV pA pW pDV pAV pRef pDig gear")}</div>
      </div>
      <div class="main">
        <div class="dock">
          <div class="dhead"><div class="dtitle">${fit("Design Toolbox", 105, 15.500)}</div>
            <div class="dbtns"><div class="btn3">${pic(F("M1 6h6L4 3z", "#999"), 8, 8)}</div><div class="btn3">${pic(S("M1 1l5 6m0-6L1 7", "#000", "none", 1.600), 8, 8)}</div></div></div>
          <div class="dbody">
            <div class="dtools">${["blankBlue", "open", "saveG", "detach", "rename"].map((n) => pic(I[n], 17, 17))}<div class="sp"></div>${pic(I.recent, 17, 17)}</div>
            <div class="tree">${[0, 1, 2].map(tree)}<div class="hs"><div class="thumb"></div></div></div>
          </div>
          <div class="tabs"><div class="tab act" style="width:61px">${fit("Hierarchy", 47, 11, "", 14)}</div><div class="tab" style="width:47px;margin-left:-2px">${fit("Visibility", 37, 11, "", 14)}</div><div class="tab" style="width:70px">${fit("Project View", 60, 11, "", 14)}</div></div>
        </div>
        <div class="view">
          <div class="vbox"><div class="frame">${this.schematic()}<div class="vs"><div class="vthumb"></div></div><div class="hsb"><div class="hthumb"></div></div></div></div>
          <div class="docs">
            <div class="doc" style="width:548px">${pic(sheet)}${fit(`${doc} I`, 517, 15)}</div>
            <div class="doc act" style="width:553px">${pic(sheet)}${fit(`${doc} II`, 522, 15)}</div>
            <div class="doc" style="width:555px">${pic(sheet)}${fit(`${doc} III`, 526, 15)}</div>
            <div class="btn3" style="width:16px;height:16px;margin:5px 0 0 4px">${pic(I.cascade, 15, 15)}</div>
          </div>
        </div>
        <div class="inst">${instruments}<div class="hr"></div>
          ${pic([F("M0 0h16v16H0z", "#002020"), S("M0 .5h16M0 15.500h16", "#888", "none", 1), F("M5 3l8 5-8 5z", "#ffe020"), S("M7 6.500v3M5.500 8h3"), S("M0 5h5M12 8h4", "#e02020"), S("M0 11h5", "#2020e0")])}
          ${dropR("#000")}<div class="hr"></div>
          ${pic(S("M2 8l5 6 7-6-5-5zM5 8l4 3M8 5l4 3", "#b0b0b0"))}${dropR("#a0a0a0")}<div class="hr"></div>
          ${pic([svg`<circle cx="4.500" cy="11" r="3" fill="#fff" stroke="#901010" stroke-width="2"/>`, S("M6 9l5-6", "#000", "none", 2), S("M11 3l1-2 1 2 1-2 2 2"), S("M7 11.500h9", "#e02020", "none", 1.500)])}
        </div>
      </div>
      <div class="spread">
        <div class="side"><div class="btn3">${pic(S("M1 1l5 6m0-6L1 7", "#000", "none", 1.600), 8, 8)}</div><div class="btn3">${pic(F("M3 1l3 3-3 3z", "#999"), 8, 8)}</div>
          <div class="vert"><svg width="25" height="105"><text transform="translate(13.500 101) rotate(-90)" font-size="15" textLength="119" lengthAdjust="spacingAndGlyphs">Spreadsheet View</text></svg></div></div>
        <div class="sheetcol">
          <div class="log"><div class="logbox">${fit("Multisim\u00a0 -\u00a0 Friday, May 24, 2024, 7:19:42 PM", 295, 15)}</div></div>
          <div class="tabs"><div class="tab act" style="width:48px">${fit("Results", 35, 11, "", 14)}</div>
            ${([["Nets", 23, 39], ["Components", 60, 70], ["Copper layers", 67, 77], ["Simulation", 48, 58]] as [string, number, number][]).map(([t, w, tw]) => html`<div class="tab" style="width:${tw}px">${fit(t, w, 11, "", 14)}</div>`)}</div>
        </div>
      </div>
      <div class="status">${fit("For Help, press F1", 117, 15)}<div class="sp"></div>
        <div style="width:148px">${fit("-", 5, 15)}</div>
        <div class="cell" style="width:183px"></div>
        <div class="cell" style="width:183px;padding-left:4px">${fit("Tran: 0.732 s", 80, 15)}</div>
        <div class="cell" style="width:61px"><div class="segs">${[0, 1, 2, 3, 4, 5, 6].map(() => html`<div class="seg"></div>`)}</div></div>
      </div>
      <div class="task">
        <span style="width:19px"></span>
        ${pic([svg`<defs><linearGradient id="sun" x1="0" y1="0" x2="0" y2="1"><stop offset="0" stop-color="#ffc93c"/><stop offset="1" stop-color="#f07818"/></linearGradient></defs><path d="M16 1q9 4 7 12-3 9-12 9Q2 21 0 14q12 0 16-13z" fill="url(#sun)"/>`, S("M4 5.500h20M4 9.500h20M0 13.500h20M0 17.500h15", "#ffd978", "none", 1.600)], 24, 24)}
        <span style="width:7px"></span>
        <div class="stack" style="width:512px">${fit("33°C", 25, 11.500, "hi", 16)}${fit("Haze", 27, 11.500, "dim", 16)}</div>
        <span style="width:11px"></span>
        ${pic([F("M0 0h11v11H0zM12 0h11v11H12z", "#6fdcff"), F("M0 12h11v11H0zM12 12h11v11H12z", "#2fb2f5")], 23, 23)}
        <div class="search">${pic([svg`<circle cx="6.500" cy="6.500" r="4.800" fill="none" stroke="#ddd" stroke-width="1.600"/>`, S("M10 10l5 5", "#ddd", "none", 1.800)])}${fit("Search", 51, 15.500, "", 22)}</div>
        ${app(pic([F("M6 1h18v16H6z", "#f4f4f4"), F("M0 7h18v15H0z", "#5c5c5c"), F("M6 7h12v10H6z", "#b4b4b4")], 24, 24))}
        ${app(pic([svg`<circle cx="14" cy="9" r="7" fill="none" stroke="#ff7a00" stroke-width="3.500"/>`, S("M9 15l-7 7", "#ff7a00", "none", 4)], 24, 24))}
        ${app(pic([F("M0 2h9l2 3h13v17H0z", "#e8a010"), F("M0 6h24v16H0z", "#ffd25e"), F("M4 15h16v8H4z", "#1a80d8"), F("M8 18h8v2H8z", "#0c5aa8")], 24, 24), "dot")}
        ${app(edge(svg`<circle cx="6" cy="18" r="5.500" fill="#262626"/>`), "dot")}
        ${app(edge([F("M0 15h11v9H0z", "#e08a10"), F("M0 18h11v2H0z", "#a05800"), F("M3 13h5v2H3z", "#a05800")]))}
        ${app(pic([F("M0 0h24v24H0z", "#e03c28"), svg`<circle cx="12" cy="12" r="7" fill="none" stroke="#fff" stroke-width="3" stroke-dasharray="3.300 2.200"/><circle cx="12" cy="12" r="3.500" fill="none" stroke="#fff" stroke-width="1.400" stroke-dasharray="1.200 1.600"/>`], 24, 24))}
        ${app(pic([svg`<circle cx="12" cy="12" r="12" fill="#1ed760"/>`, S("M5 8q8-2 14 2M6 12q7-2 12 1.500M6.500 16q6-1.500 10 1", "#000", "none", 2)], 24, 24))}
        ${app(pic([F("M17 0l7 3v18l-7 3L6 13l-4 3-2-1.500L4 12 0 9l2-1.500L6 11zM17 7l-7 5 7 5z", "#1c84cc"), F("M17 0l7 3v18l-7 3z", "#35a8f0")], 24, 24))}
        ${app(pic([F("M1 2l10-2v11H1z", "#e02820"), F("M12 0h10v11H12z", "#48b830"), F("M2 13h9v9l-8 2z", "#d0c020"), F("M12 12h10l-2 9-8 2z", "#5a20c0")], 24, 24))}
        ${app(pic([F("M6 3q12 0 14 9-2 9-14 9 8-9 0-18z", "#fff"), S("M1 6.500h7M1 17.500h7M19 12h5", "#58d058", "none", 1.200)], 24, 24))}
        ${app(pic([svg`<rect width="22" height="22" rx="3" fill="#5a5296"/>`, S("M2 4.500h12v4h6M2 7.500h8M13 3v3M2 16.500h5v4M12 14v7M17 14v7", "#d8d4f4", "none", 1.500), S("M2 11.500h8M13 11.500h7M3 19.500h8", "#e8c060", "none", 1.400)], 22, 22), "wide")}
        ${app(pic([svg`<rect x="3" y="2" width="19" height="20" rx="4" fill="#1d2c40" stroke="#80685c"/><circle cx="12.500" cy="8.500" r="2.500" fill="#38b8e8"/><circle cx="9.500" cy="14.500" r="2.500" fill="#d8e040"/><circle cx="15.500" cy="14.500" r="2.500" fill="#f05040"/>`], 24, 24))}
        <div class="sp"></div>
        ${pic(S("M2 9l5-5 5 5", "#fff", "none", 1.500), 14, 14)}<span style="width:16px"></span>
        ${pic(S("M0 6q8-7 16 0M2.500 8.500q5.500-5 11 0M5 11q3-3 6 0M7 13.500h2", "#fff", "none", 1.400))}<span style="width:8px"></span>
        ${pic(S("M1 5.500h3l4-4v13l-4-4H1zM10 5.500q2 2.500 0 5M12 3.500q3.500 4.500 0 9M14 2q4.500 6 0 12", "#fff", "none", 1.200))}<span style="width:8px"></span>
        ${pic([S("M5 3.500h8.500v9h-11V9M15 6.500v3", "#fff", "none", 1.500), F("M6 6h6v5H6zM3 0L0 6h3l-1 4 4-6H3.500z", "#fff")])}<span style="width:17px"></span>
        <div class="stack" style="align-items:flex-end">${fit("9:59 PM", 43, 11.500, "", 17)}${fit("5/24/2024", 56, 11.500, "", 17)}</div>
        <span style="width:8px"></span>${pic(S("M1 12.500h12l-1.500-3V6q0-4.500-4.500-4.500T2.500 6v3.500zM5 14q2 2 4 0", "#fff", "none", 1.300), 14, 17)}
        <span style="width:17px"></span>
        ${pic([svg`<defs><linearGradient id="cp" x1="0" y1="0" x2="0" y2="1"><stop offset="0" stop-color="#1880f0"/><stop offset=".5" stop-color="#30b8a0"/><stop offset="1" stop-color="#e8d020"/></linearGradient><linearGradient id="cq" x1="0" y1="0" x2="0" y2="1"><stop offset="0" stop-color="#a070f0"/><stop offset=".6" stop-color="#e070b0"/><stop offset="1" stop-color="#f08060"/></linearGradient></defs><rect x="8" y="6" width="15.500" height="13" rx="4" fill="url(#cq)"/><path d="M7 0h8q3 0 4 6h-4q-2 0-3 4l-2 8H4q-5 0-4-5L3 4q1-4 4-4z" fill="url(#cp)"/><rect x="6" y="15.500" width="18" height="9" rx="2" fill="#ffc820"/>`, letter("PRE", 15, 23, "#000", 7.5)], 24, 26)}
        <span style="width:20px"></span>
      </div>
      <div class="tip">${fit(`${doc} II`, 522, 15, "", 22)}</div>
      <multi-meter class="m1" name="XMM1" reading="7.5 V" mode="V" .readingWidth=${37}></multi-meter>
      <multi-meter class="m2" name="XMM2" reading="1.5 mA" mode="A" .readingWidth=${49}></multi-meter>
    </div>`;
  }
}
